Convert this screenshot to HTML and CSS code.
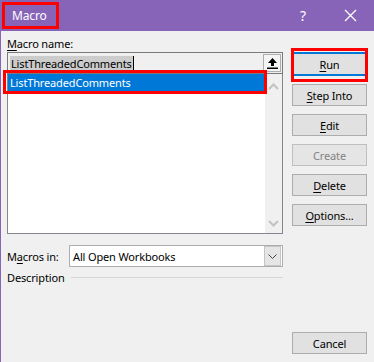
FILE: index.html
```html
<!DOCTYPE html>
<html lang="en">
<head>
  <meta charset="UTF-8" />
  <title>Macro</title>
  <link rel="stylesheet" href="styles.css">
</head>
<body>
  <div class="window">

    <header class="titlebar">
      <span class="title">Macro</span>
      <span class="help">?</span>
      <span class="close">
        <svg width="13" height="13" viewBox="0 0 13 13"><path d="M1 1 L12 12 M12 1 L1 12" stroke="#fff" stroke-width="1.3" fill="none"/></svg>
      </span>
    </header>

    <div class="dialog">
      <section class="main">
        <div class="label"><u>M</u>acro name:</div>

        <div class="namebox">
          <span class="sel-text">ListThreadedComments</span><span class="caret"></span>
          <span class="up-btn">
            <svg width="11" height="12" viewBox="0 0 11 12"><path d="M5.5 1 L10 6 H7 V9 H4 V6 H1 Z" fill="#000"/><rect x="0" y="10.5" width="11" height="1.5" fill="#000"/></svg>
          </span>
        </div>

        <div class="listbox">
          <div class="items">
            <div class="item selected">ListThreadedComments</div>
          </div>
          <div class="scrollbar">
            <svg width="11" height="7" viewBox="0 0 11 7"><path d="M1 6 L5.5 1.5 L10 6" stroke="#c2c2c2" stroke-width="2" fill="none"/></svg>
            <svg width="11" height="7" viewBox="0 0 11 7"><path d="M1 1 L5.5 5.5 L10 1" stroke="#c2c2c2" stroke-width="2" fill="none"/></svg>
          </div>
        </div>

        <div class="macros-in">
          <span class="label">M<u>a</u>cros in:</span>
          <div class="select">
            <span class="select-value">All Open Workbooks</span>
            <span class="select-arrow">
              <svg width="9" height="5" viewBox="0 0 9 5"><path d="M0.5 0.5 L4.5 4.5 L8.5 0.5" stroke="#444" stroke-width="1" fill="none"/></svg>
            </span>
          </div>
        </div>

        <div class="description">
          <span class="label">Description</span>
          <span class="rule"></span>
        </div>
      </section>

      <aside class="buttons">
        <button class="btn default"><u>R</u>un</button>
        <button class="btn"><u>S</u>tep Into</button>
        <button class="btn"><u>E</u>dit</button>
        <button class="btn" disabled>Create</button>
        <button class="btn"><u>D</u>elete</button>
        <button class="btn"><u>O</u>ptions...</button>
        <button class="btn cancel">Cancel</button>
      </aside>
    </div>

  </div>
</body>
</html>
```

FILE: styles.css
```css
body {
  margin: 0;
  padding: 0;
  background-color: #f0f0f0;
  font-family: 'Noto Sans', 'Open Sans', sans-serif;
  font-size: 11px;
  letter-spacing: -0.15px;
  color: #000;
}

u {
  text-decoration-thickness: 1px;
  text-underline-offset: 2px;
}

.window {
  display: flex;
  flex-direction: column;
  height: 362px;
  border-left: 1px solid #8764b8;
  box-sizing: border-box;
}

/* title bar */

.titlebar {
  display: flex;
  align-items: center;
  height: 31px;
  background-color: #8764b8;
  color: #fff;
}

.title {
  display: flex;
  align-items: center;
  box-sizing: border-box;
  height: 27px;
  width: 57px;
  margin-left: 1px;
  padding-left: 7px;
  border: 3px solid #ff0000;
  font-size: 12px;
}

.help {
  margin-left: auto;
  font-size: 14px;
  width: 14px;
}

.close {
  display: flex;
  margin-left: 30px;
  margin-right: 17px;
}

/* dialog body */

.dialog {
  flex: 1;
  display: flex;
}

.main {
  width: 276px;
  margin-left: 6px;
  display: flex;
  flex-direction: column;
}

.main > .label {
  height: 16px;
  margin-top: 5px;
  line-height: 16px;
}

.namebox {
  position: relative;
  display: flex;
  align-items: center;
  height: 22px;
  box-sizing: border-box;
  border: 1px solid #7a7a7a;
  padding-left: 2px;
}

.sel-text {
  background-color: #cccccc;
  line-height: 15px;
  padding: 0 1px;
}

.caret {
  width: 1px;
  height: 15px;
  background-color: #000;
}

.up-btn {
  display: flex;
  align-items: center;
  justify-content: center;
  margin-left: auto;
  margin-right: 1px;
  width: 16px;
  height: 16px;
  border: 1px solid #adadad;
  background-color: #f4f4f4;
}

.listbox {
  display: flex;
  height: 160px;
  box-sizing: border-box;
  border: 1px solid #828790;
  border-top: none;
}

.items {
  flex: 1;
  background-color: #fff;
}

.item {
  position: relative;
  height: 17px;
  line-height: 17px;
  padding-left: 2px;
}

.item.selected {
  background-color: #0078d7;
  color: #fff;
}

.item.selected::after {
  content: "";
  position: absolute;
  left: -5px;
  top: -4px;
  width: 258px;
  height: 18px;
  border: 3px solid #ff0000;
}

.scrollbar {
  width: 17px;
  display: flex;
  flex-direction: column;
  justify-content: space-between;
  align-items: center;
  padding: 9px 0 6px;
  background-color: #f0f0f0;
}

.macros-in {
  display: flex;
  align-items: center;
  margin-top: 11px;
}

.macros-in .label {
  width: 62px;
}

.select {
  flex: 1;
  display: flex;
  align-items: center;
  height: 22px;
  box-sizing: border-box;
  border: 1px solid #adadad;
  background-color: #fff;
}

.select-value {
  padding-left: 3px;
}

.select-arrow {
  display: flex;
  align-items: center;
  justify-content: center;
  margin-left: auto;
  width: 15px;
  height: 18px;
  margin-right: 1px;
  background-color: #e5e5e5;
  border: 1px solid #c4c4c4;
}

.description {
  display: flex;
  align-items: center;
  margin-top: 3px;
}

.rule {
  flex: 1;
  height: 1px;
  margin-left: 6px;
  background-color: #d5d5d5;
}

/* buttons */

.buttons {
  display: flex;
  flex-direction: column;
  gap: 8px;
  width: 75px;
  margin-left: 9px;
  padding-top: 21px;
  padding-bottom: 8px;
}

.btn {
  position: relative;
  height: 22px;
  padding: 0;
  font-family: inherit;
  font-size: 11px;
  letter-spacing: -0.15px;
  color: #000;
  background-color: #e1e1e1;
  border: 1px solid #adadad;
}

.btn:disabled {
  color: #838383;
  background-color: #e5e5e5;
  border-color: #bfbfbf;
}

.btn.default {
  height: 24px;
  border: 2px solid #0078d7;
}

.btn.default::after {
  content: "";
  position: absolute;
  left: -3px;
  top: -6px;
  width: 71px;
  height: 28px;
  border: 3px solid #ff0000;
}

.btn.cancel {
  margin-top: auto;
}
```
